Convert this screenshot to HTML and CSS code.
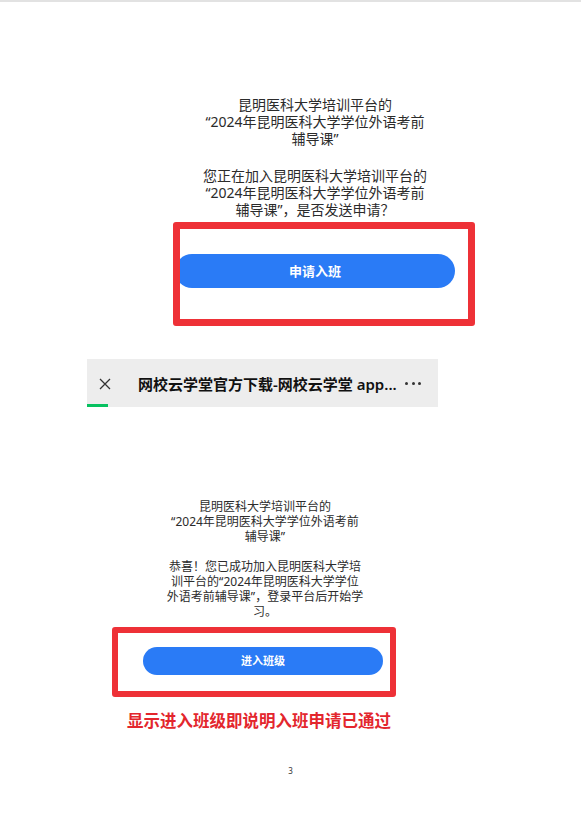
FILE: index.html
```html
<!DOCTYPE html>
<html lang="zh-CN">
<head>
    <meta charset="UTF-8">
    <meta name="viewport" content="width=device-width, initial-scale=1.0">
    <title>入班申请说明</title>
    <link rel="stylesheet" href="styles.css">
</head>
<body>

    <div class="page">

        <!-- Step 1: apply -->
        <div class="intro intro-apply">
            <p>昆明医科大学培训平台的<br>“2024年昆明医科大学学位外语考前<br>辅导课”</p>
            <p class="gap">您正在加入昆明医科大学培训平台的<br>“2024年昆明医科大学学位外语考前<br>辅导课”，是否发送申请？</p>
        </div>

        <div class="mark mark-apply">
            <div class="btn btn-apply">申请入班</div>
        </div>

        <!-- Browser title bar -->
        <div class="browser-bar">
            <div class="bar-row">
                <svg class="close-icon" width="12" height="12" viewBox="0 0 12 12">
                    <path d="M1 1 L11 11 M11 1 L1 11" stroke="#333" stroke-width="1.3" fill="none"/>
                </svg>
                <span class="bar-title">网校云学堂官方下载-网校云学堂 app...</span>
                <span class="bar-more"><i></i><i></i><i></i></span>
            </div>
            <div class="bar-progress"></div>
        </div>

        <!-- Step 2: joined -->
        <div class="intro intro-joined">
            <p>昆明医科大学培训平台的<br>“2024年昆明医科大学学位外语考前<br>辅导课”</p>
            <p class="gap">恭喜！您已成功加入昆明医科大学培<br>训平台的“2024年昆明医科大学学位<br>外语考前辅导课”，登录平台后开始学<br>习。</p>
        </div>

        <div class="mark mark-joined">
            <div class="btn btn-joined">进入班级</div>
        </div>

        <p class="note">显示进入班级即说明入班申请已通过</p>

        <p class="page-num">3</p>
    </div>

</body>
</html>
```

FILE: styles.css
```css
/* Global */
body {
    margin: 0;
    background-color: #fff;
    color: #2b2b2b;
    font-family: "Noto Sans", "Noto Sans CJK SC", sans-serif;
}

p {
    margin: 0;
}

.page {
    border-top: 2px solid #e2e2e2;
    min-height: 821px;
}

/* Intro text */
.intro {
    width: 300px;
    text-align: center;
}

.intro-apply {
    margin: 94px 0 0 165px;
    font-size: 14px;
    line-height: 17px;
}

.intro-apply .gap {
    margin-top: 20px;
}

.intro-joined {
    margin: 92px 0 0 115px;
    font-size: 12px;
    line-height: 15px;
}

.intro-joined .gap {
    margin-top: 15px;
}

/* Red marking boxes */
.mark {
    box-sizing: border-box;
    border: 7px solid #ee3137;
    border-radius: 3px;
    overflow: hidden;
}

.mark-apply {
    width: 302px;
    height: 104px;
    margin: 4px 0 0 173px;
    padding-top: 25px;
}

.mark-joined {
    width: 284px;
    height: 70px;
    margin: 8px 0 0 112px;
    border-width: 6px;
    padding-top: 14px;
}

/* Buttons */
.btn {
    background-color: #2a7bf6;
    color: #fff;
    text-align: center;
    font-weight: 700;
    border-radius: 20px;
}

.btn-apply {
    width: 280px;
    height: 34px;
    margin-left: -5px;
    line-height: 34px;
    font-size: 13px;
}

.btn-joined {
    width: 240px;
    height: 28px;
    margin-left: 25px;
    line-height: 28px;
    font-size: 11px;
}

/* Browser bar */
.browser-bar {
    width: 351px;
    margin: 33px 0 0 87px;
    background-color: #ededed;
}

.bar-row {
    display: flex;
    align-items: center;
    height: 45px;
    padding: 4px 17px 0 12px;
    box-sizing: border-box;
}

.close-icon {
    flex: none;
}

.bar-title {
    flex: 1;
    margin-left: 27px;
    font-size: 15px;
    font-weight: 600;
    color: #111;
    white-space: nowrap;
}

.bar-more {
    display: flex;
    gap: 3.5px;
}

.bar-more i {
    width: 3px;
    height: 3px;
    border-radius: 50%;
    background-color: #333;
}

.bar-progress {
    width: 21px;
    height: 3px;
    background-color: #07c160;
}

/* Note and page number */
.note {
    width: 300px;
    margin: 13px 0 0 109px;
    text-align: center;
    color: #e3262d;
    font-size: 16.5px;
    font-weight: 700;
    line-height: 22px;
}

.page-num {
    margin-top: 34px;
    text-align: center;
    font-size: 8px;
    line-height: 10px;
    color: #333;
}
```
